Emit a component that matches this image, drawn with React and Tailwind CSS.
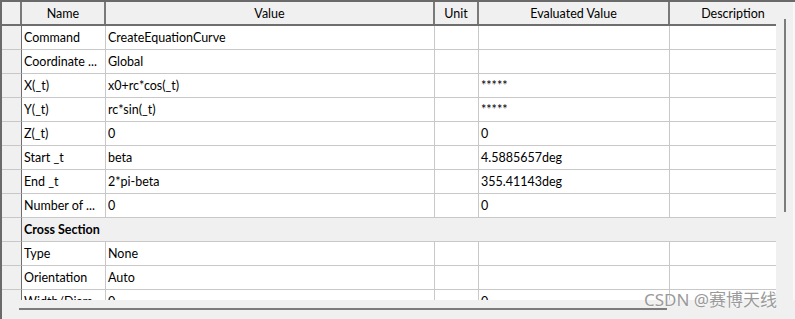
import React from "react";

const rows = [
  { name: "Command", value: "CreateEquationCurve", ev: "" },
  { name: "Coordinate ...", value: "Global", ev: "" },
  { name: "X(_t)", value: "x0+rc*cos(_t)", ev: "*****" },
  { name: "Y(_t)", value: "rc*sin(_t)", ev: "*****" },
  { name: "Z(_t)", value: "0", ev: "0" },
  { name: "Start _t", value: "beta", ev: "4.5885657deg" },
  { name: "End _t", value: "2*pi-beta", ev: "355.41143deg" },
  { name: "Number of ...", value: "0", ev: "0" },
  { section: "Cross Section" },
  { name: "Type", value: "None", ev: "" },
  { name: "Orientation", value: "Auto", ev: "" },
  { name: "Width/Diam...", value: "0", ev: "0" },
];

const font = { fontFamily: 'Lato, "Noto Sans", "Noto Sans CJK SC", sans-serif' };

function Row({ r }) {
  if (r.section) {
    return (
      <div className="flex h-[24px] shrink-0">
        <div className="w-[20px] shrink-0 bg-[#f0f0f0] border-r border-r-[#6e6e6e] border-b border-b-[#c8c8c8]" />
        <div className="flex-1 bg-[#f0f0f0] border-b border-b-[#c8c8c8] flex items-center pl-[2px] pt-[2px] font-bold">
          {r.section}
        </div>
      </div>
    );
  }
  return (
    <div className="flex h-[24px] shrink-0">
      <div className="w-[20px] shrink-0 bg-[#f0f0f0] border-r border-r-[#6e6e6e] border-b border-b-[#c8c8c8]" />
      <div className="w-[84px] shrink-0 border-r border-b border-[#c8c8c8] flex items-center pl-[2px] pt-[2px] whitespace-nowrap overflow-hidden">
        {r.name}
      </div>
      <div className="w-[329px] shrink-0 border-r border-b border-[#c8c8c8] flex items-center pl-[2px] pt-[2px] whitespace-nowrap overflow-hidden">
        {r.value}
      </div>
      <div className="w-[44px] shrink-0 border-r border-b border-[#c8c8c8]" />
      <div className="w-[191px] shrink-0 border-r border-b border-[#c8c8c8] flex items-center pl-[2px] pt-[2px] whitespace-nowrap overflow-hidden">
        {r.ev}
      </div>
      <div className="flex-1 border-b border-[#c8c8c8]" />
    </div>
  );
}

export default function App() {
  return (
    <div
      className="relative w-[795px] h-[319px] overflow-hidden bg-[#f0f0f0] border-l-2 border-t-2 border-l-[#6a6a6a] border-t-[#6a6a6a] text-[12.5px] text-black leading-none"
      style={font}
    >
      <div className="flex h-[298px]">
        <div className="w-[774px] shrink-0 flex flex-col bg-white overflow-hidden">
          <div className="flex h-[24px] shrink-0 bg-[#f0f0f0] border-b-2 border-b-[#6e6e6e]">
            <div className="w-[20px] shrink-0 border-r-2 border-r-[#7a7a7a]" />
            <div className="w-[84px] shrink-0 border-r-2 border-r-[#7a7a7a] flex items-center justify-center pt-[2px]">Name</div>
            <div className="w-[329px] shrink-0 border-r-2 border-r-[#7a7a7a] flex items-center justify-center pt-[2px]">Value</div>
            <div className="w-[44px] shrink-0 border-r-2 border-r-[#7a7a7a] flex items-center justify-center pt-[2px]">Unit</div>
            <div className="w-[191px] shrink-0 border-r-2 border-r-[#7a7a7a] flex items-center justify-center pt-[2px]">Evaluated Value</div>
            <div className="flex-1 flex items-center justify-center pl-[20px] pt-[2px]">Description</div>
          </div>
          {rows.map((r, i) => (
            <Row key={i} r={r} />
          ))}
        </div>
        <div className="flex-1 flex flex-col bg-[#f0f0f0] pt-[17px] border-r-2 border-r-[#f8f8f8]">
          <div className="ml-[8px] w-[2px] h-[193px] bg-[#7c7c7c]" />
        </div>
      </div>
      <div className="h-[19px] flex flex-col pt-[8px]">
        <div className="ml-[17px] w-[648px] h-[2px] bg-[#7c7c7c]" />
      </div>
      <div
        className="absolute left-[642px] top-[289px] text-[17px] text-[#9a9a9a] whitespace-nowrap [text-shadow:0_0_2px_#ffffff,0_0_1px_#ffffff]"
        style={{ fontFamily: '"Noto Sans", "Noto Sans CJK SC", sans-serif' }}
      >
        CSDN @赛博天线
      </div>
    </div>
  );
}
